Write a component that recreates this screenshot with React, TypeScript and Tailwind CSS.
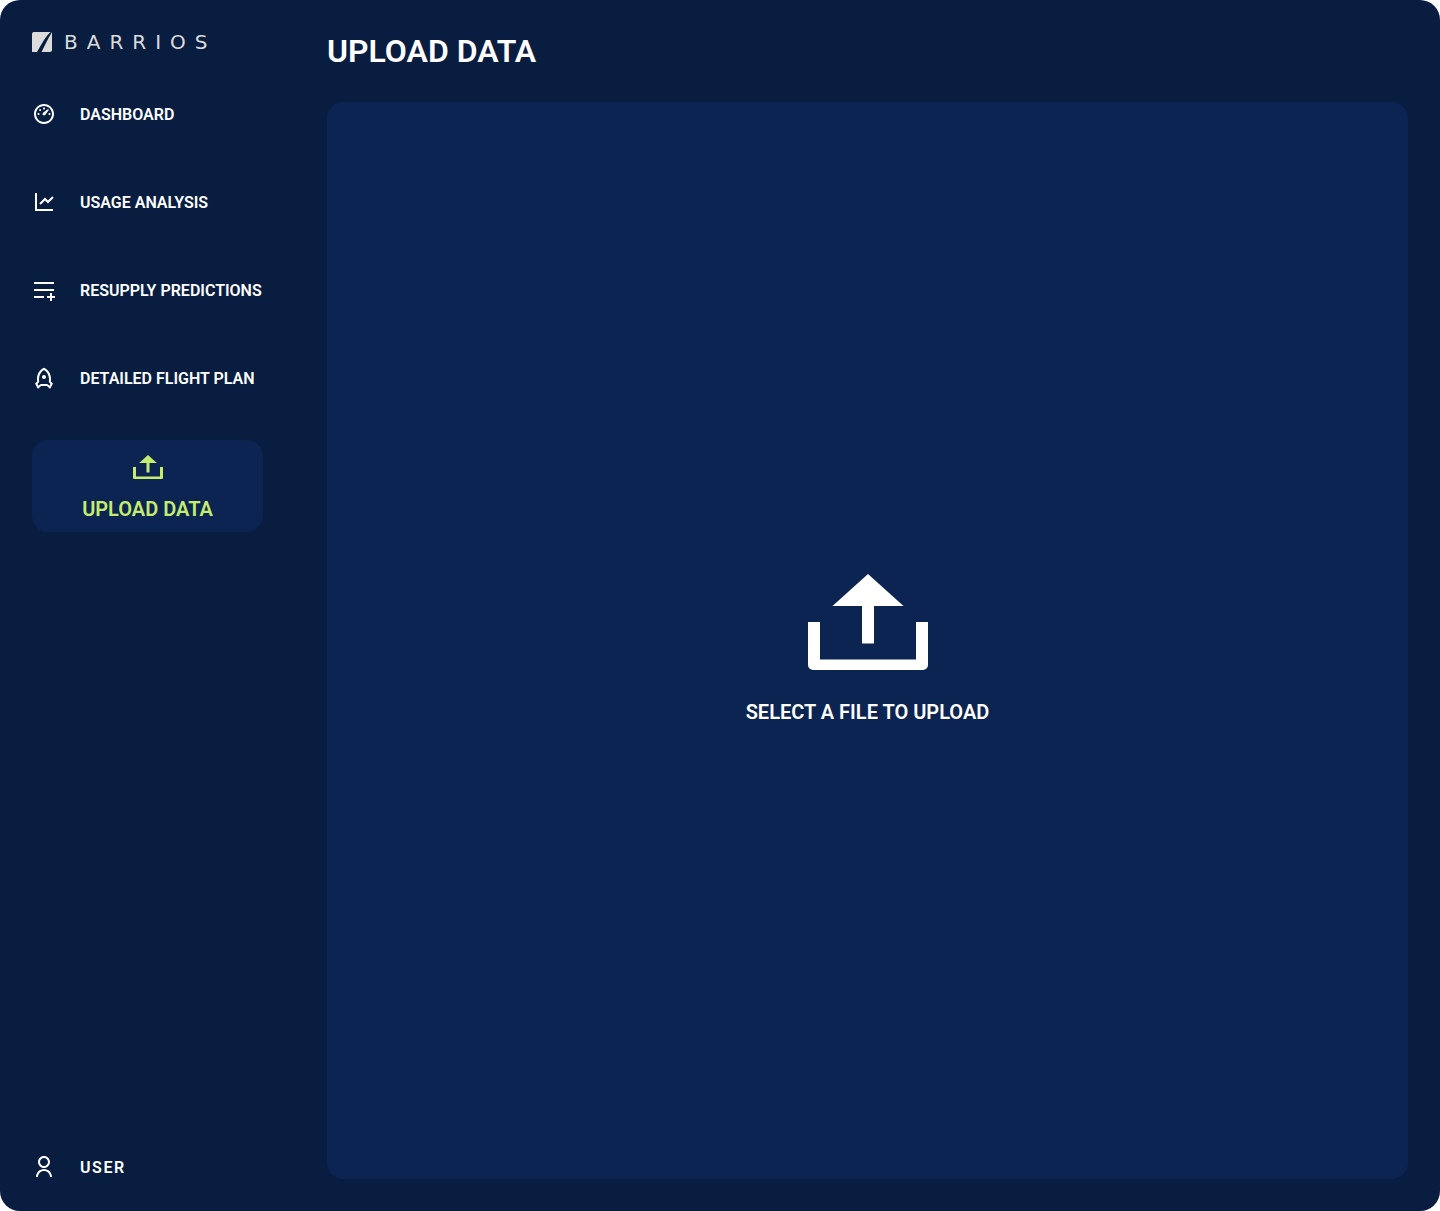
import type { ReactNode } from 'react';
import {
  RiDashboard3Line,
  RiLineChartLine,
  RiPlayListAddLine,
  RiRocketLine,
  RiUserLine,
} from 'react-icons/ri';

function UploadIcon({ className }: { className: string }) {
  return (
    <svg viewBox="0 0 120 96" className={className} fill="currentColor" aria-hidden="true">
      <path d="M60 0 95.5 32H66V69.500H54V32H24.500Z" />
      <path d="M0 48H12V85.500H108V48H120V91A5 5 0 0 1 115 96H5A5 5 0 0 1 0 91Z" />
    </svg>
  );
}

function Logo() {
  return (
    <a href="#home" aria-label="Barrios" className="flex h-5 items-center gap-3 text-[#dcdcdc]">
      <svg viewBox="0 0 20 20" className="size-5 shrink-0" fill="currentColor" aria-hidden="true">
        <path d="M2 0H18.500C14.500 4 11.500 8.500 9 13L5 20H0V2A2 2 0 0 1 2 0Z" />
        <path d="M20 0V18A2 2 0 0 1 18 20H9.500L13.500 12C15.500 8 17.500 4 20 0Z" />
      </svg>
      <span className="font-['DejaVu_Sans',sans-serif] text-xl leading-5 tracking-[0.45em]">BARRIOS</span>
    </a>
  );
}

function NavItem({ icon, label }: { icon: ReactNode; label: string }) {
  return (
    <a href="#" className="flex h-6 items-center gap-6 text-base leading-[25px] font-semibold whitespace-nowrap">
      {icon}
      {label}
    </a>
  );
}

export default function App() {
  return (
    <div className="bg-white font-['Roboto',sans-serif] text-white">
      <div className="flex min-h-screen gap-16 rounded-[20px] bg-[#081d40] p-8">
        <aside className="flex w-[231px] shrink-0 flex-col">
          <Logo />
          <nav className="mt-[50px] flex flex-col gap-16">
            <NavItem icon={<RiDashboard3Line className="size-6" />} label="DASHBOARD" />
            <NavItem icon={<RiLineChartLine className="size-6" />} label="USAGE ANALYSIS" />
            <NavItem icon={<RiPlayListAddLine className="size-6" />} label="RESUPPLY PREDICTIONS" />
            <NavItem icon={<RiRocketLine className="size-6" />} label="DETAILED FLIGHT PLAN" />
          </nav>
          <a
            href="#upload"
            aria-current="page"
            className="mt-[50px] flex h-[92px] flex-col items-center gap-4 rounded-2xl bg-[#0b2451] pt-[15px] text-xl font-semibold text-[#c5ec6f]"
          >
            <UploadIcon className="h-6 w-[30px]" />
            UPLOAD DATA
          </a>
          <a
            href="#user"
            className="mt-auto flex h-6 items-center gap-6 text-base leading-[25px] font-semibold tracking-widest"
          >
            <RiUserLine className="size-6" />
            USER
          </a>
        </aside>
        <main className="flex min-w-0 flex-1 flex-col gap-8">
          <h1 className="text-[32px] leading-[38px] font-semibold">UPLOAD DATA</h1>
          <button
            type="button"
            className="flex flex-1 cursor-pointer flex-col items-center justify-center gap-7 rounded-2xl bg-[#0b2451] pt-[18px] text-xl font-semibold"
          >
            <UploadIcon className="h-24 w-[120px]" />
            SELECT A FILE TO UPLOAD
          </button>
        </main>
      </div>
    </div>
  );
}
